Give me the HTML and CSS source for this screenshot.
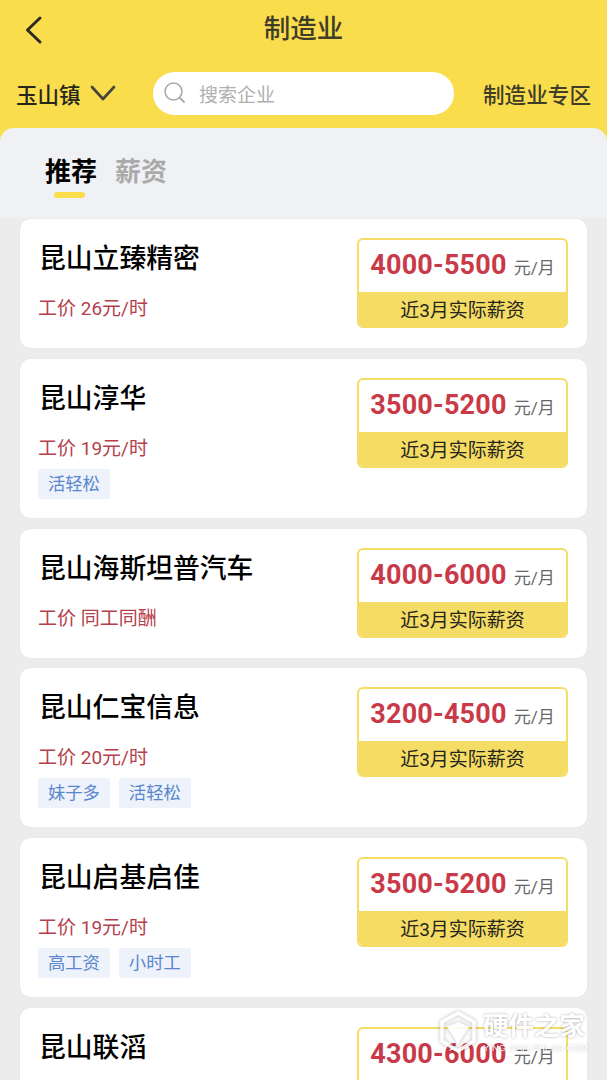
FILE: index.html
```html
<!DOCTYPE html>
<html lang="zh-CN">
<head>
  <meta charset="UTF-8">
  <meta name="viewport" content="width=device-width, initial-scale=1.0">
  <title>制造业</title>
  <link rel="stylesheet" href="styles.css">
</head>
<body>
  <div class="top">
    <div class="nav">
      <svg class="back" width="20" height="30" viewBox="0 0 20 30"><path d="M16 3 L3.500 15 L16 27" fill="none" stroke="#2b2b22" stroke-width="3" stroke-linecap="round" stroke-linejoin="round"/></svg>
      <span class="nav-title">制造业</span>
    </div>
    <div class="filter">
      <div class="town">
        <span>玉山镇</span>
        <svg width="26" height="16" viewBox="0 0 26 16"><path d="M2 2 L13 14 L24 2" fill="none" stroke="#45433a" stroke-width="2.600" stroke-linecap="round" stroke-linejoin="round"/></svg>
      </div>
      <div class="search">
        <svg width="24" height="24" viewBox="0 0 24 24"><circle cx="10.500" cy="10.500" r="8.500" fill="none" stroke="#a8a8a8" stroke-width="1.600"/><path d="M17 17 L21 21" stroke="#a8a8a8" stroke-width="1.800" stroke-linecap="round"/></svg>
        <span>搜索企业</span>
      </div>
      <span class="zone">制造业专区</span>
    </div>
  </div>

  <div class="panel">
    <div class="tabs">
      <div class="tab active">推荐<i></i></div>
      <div class="tab">薪资</div>
    </div>
  </div>

  <div class="list">
    <div class="card">
      <div class="info">
        <h3>昆山立臻精密</h3>
        <p class="wage">工价 26元/时</p>
      </div>
      <div class="pay">
        <div class="pay-num"><b>4000-5500</b><span>元/月</span></div>
        <div class="pay-note">近3月实际薪资</div>
      </div>
    </div>
    <div class="card">
      <div class="info">
        <h3>昆山淳华</h3>
        <p class="wage">工价 19元/时</p>
        <div class="tags"><span>活轻松</span></div>
      </div>
      <div class="pay">
        <div class="pay-num"><b>3500-5200</b><span>元/月</span></div>
        <div class="pay-note">近3月实际薪资</div>
      </div>
    </div>
    <div class="card">
      <div class="info">
        <h3>昆山海斯坦普汽车</h3>
        <p class="wage">工价 同工同酬</p>
      </div>
      <div class="pay">
        <div class="pay-num"><b>4000-6000</b><span>元/月</span></div>
        <div class="pay-note">近3月实际薪资</div>
      </div>
    </div>
    <div class="card">
      <div class="info">
        <h3>昆山仁宝信息</h3>
        <p class="wage">工价 20元/时</p>
        <div class="tags"><span>妹子多</span><span>活轻松</span></div>
      </div>
      <div class="pay">
        <div class="pay-num"><b>3200-4500</b><span>元/月</span></div>
        <div class="pay-note">近3月实际薪资</div>
      </div>
    </div>
    <div class="card">
      <div class="info">
        <h3>昆山启基启佳</h3>
        <p class="wage">工价 19元/时</p>
        <div class="tags"><span>高工资</span><span>小时工</span></div>
      </div>
      <div class="pay">
        <div class="pay-num"><b>3500-5200</b><span>元/月</span></div>
        <div class="pay-note">近3月实际薪资</div>
      </div>
    </div>
    <div class="card">
      <div class="info">
        <h3>昆山联滔</h3>
      </div>
      <div class="pay">
        <div class="pay-num"><b>4300-6000</b><span>元/月</span></div>
      </div>
    </div>
  </div>

  <!-- 水印 -->
  <div class="mark">
    <svg width="38" height="42" viewBox="0 0 38 42"><path d="M19 2 L35 11 L35 30 L19 40 L3 30 L3 11 Z" fill="none" stroke="#fff" stroke-width="3.500"/><path d="M8 16 L19 11 L30 16 L19 33 Z" fill="#fff"/></svg>
    <div class="mark-text">
      <div class="mark-cn">硬件之家</div>
      <div class="mark-en">YING JIAN ZHI JIA.COM</div>
    </div>
  </div>
</body>
</html>
```

FILE: styles.css
```css
html, body {
  height: 1080px;
  overflow: hidden;
}
body {
  position: relative;
  margin: 0;
  background: #ececec;
  font-family: "Roboto", "Noto Sans CJK SC", sans-serif;
  color: #000;
}
.top {
  background: #fadd4d;
  height: 128px;
  padding: 0 16px;
  box-sizing: border-box;
}
.nav {
  position: relative;
  height: 71px;
  display: flex;
  align-items: center;
  justify-content: center;
  padding-bottom: 14px;
  box-sizing: border-box;
}
.back {
  position: absolute;
  left: 8px;
  top: 15px;
}
.nav-title {
  font-size: 26.500px;
  line-height: 30px;
  font-weight: 500;
  color: #3f3d28;
}
.filter {
  display: flex;
  align-items: center;
  height: 44px;
}
.town {
  display: flex;
  align-items: center;
  gap: 9px;
  width: 137px;
  font-size: 21.500px;
  font-weight: 500;
  color: #26251c;
}
.search {
  display: flex;
  align-items: center;
  gap: 12px;
  width: 301px;
  height: 43px;
  padding-left: 10px;
  box-sizing: border-box;
  background: #fff;
  border-radius: 22px;
  font-size: 19px;
  color: #b0b0b0;
}
.zone {
  margin-left: 29px;
  font-size: 21.600px;
  font-weight: 500;
  color: #3f3d28;
  white-space: nowrap;
}
.panel {
  background: #fadd4d;
  height: 90px;
}
.tabs {
  height: 90px;
  display: flex;
  gap: 18px;
  padding-left: 45px;
  box-sizing: border-box;
  background: #eff1f4;
  border-radius: 14px 14px 0 0;
}
.tab {
  position: relative;
  font-size: 26px;
  line-height: 34px;
  margin-top: 27px;
  font-weight: 700;
  color: #aaa;
}
.tab.active {
  color: #000;
}
.tab i {
  position: absolute;
  left: 9px;
  top: 37px;
  width: 31px;
  height: 6px;
  border-radius: 3px;
  background: #fadd4d;
}
.list {
  display: flex;
  flex-direction: column;
  gap: 10.700px;
  padding: 1.200px 20px 0 20px;
}
.card {
  display: flex;
  justify-content: space-between;
  flex-shrink: 0;
  min-height: 129px;
  padding: 19px 19px 0 19px;
  box-sizing: border-box;
  background: #fff;
  border-radius: 10px;
  box-shadow: 0 0 1px rgba(0, 0, 0, 0.12);
}
.card:has(.tags) {
  height: 159px;
}
.info h3 {
  margin: 2px 0 0 0;
  font-size: 26.800px;
  line-height: 38px;
  font-weight: 500;
}
.wage {
  margin: 17px 0 0 -1px;
  font-size: 19px;
  line-height: 28px;
  color: #b5404c;
}
.tags {
  display: flex;
  gap: 9px;
  margin: 6px 0 0 -1px;
}
.tags span {
  padding: 0 10px;
  height: 30px;
  line-height: 30px;
  font-size: 17.300px;
  color: #5a86cc;
  background: #edf2fb;
  border-radius: 2px;
}
.pay {
  width: 211px;
  height: 90px;
  box-sizing: border-box;
  border: 2.500px solid #f5dc64;
  border-radius: 6px;
  background: #fff;
  overflow: hidden;
}
.pay-num {
  display: flex;
  align-items: baseline;
  justify-content: center;
  gap: 7px;
  height: 52px;
  line-height: 50px;
}
.pay-num b {
  font-size: 27px;
  font-weight: 700;
  letter-spacing: 0.200px;
  color: #c93a48;
}
.pay-num span {
  font-size: 17px;
  color: #666;
}
.pay-note {
  height: 36px;
  line-height: 38px;
  text-align: center;
  font-size: 19px;
  background: #f5dc64;
  color: #26251c;
}
.mark {
  position: absolute;
  left: 439px;
  top: 1011px;
  display: flex;
  gap: 6px;
  opacity: 0.9;
  color: #fff;
  text-shadow: 0 0 3px rgba(0, 0, 0, 0.35);
}
.mark svg {
  filter: drop-shadow(0 0 2px rgba(0, 0, 0, 0.3));
}
.mark-cn {
  font-size: 25.500px;
  line-height: 30px;
  font-weight: 700;
}
.mark-en {
  font-family: "Liberation Sans", sans-serif;
  font-size: 9.500px;
  line-height: 11px;
  margin-top: 1px;
  white-space: nowrap;
}
```
